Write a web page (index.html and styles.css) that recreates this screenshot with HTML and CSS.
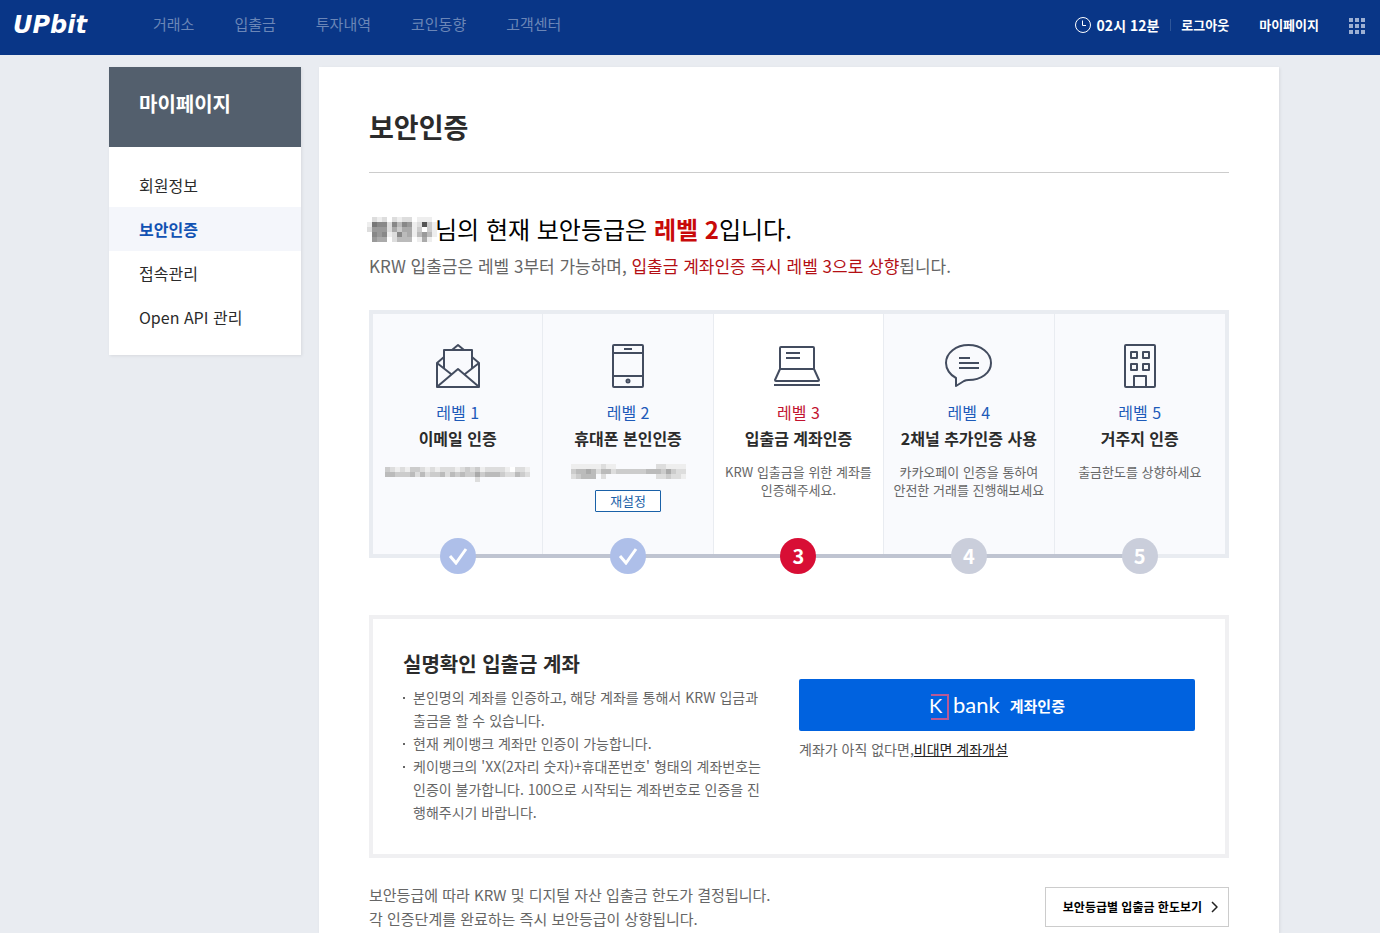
FILE: index.html
```
<!DOCTYPE html>
<html lang="ko">
<head>
<meta charset="UTF-8">
<meta name="viewport" content="width=device-width, initial-scale=1">
<title>보안인증 - UPbit</title>
<link rel="stylesheet" href="styles.css">
</head>
<body>
<header class="header">
	<a href="#" class="logo">UPbit</a>
	<nav class="gnb">
		<a href="#">거래소</a>
		<a href="#">입출금</a>
		<a href="#">투자내역</a>
		<a href="#">코인동향</a>
		<a href="#">고객센터</a>
	</nav>
	<div class="util">
		<span class="time">
			<svg width="16" height="16" viewBox="0 0 16 16"><circle cx="8" cy="8" r="7.5"/><path d="M7.500 3.500V8.500H11"/></svg>
			02시 12분
		</span>
		<a href="#" class="logout">로그아웃</a>
		<a href="#" class="mypage">마이페이지</a>
		<button type="button" class="btn-all" aria-label="전체메뉴">
			<svg width="16" height="16" viewBox="0 0 16 16"><path d="M0 0h4v4H0zM6 0h4v4H6zM12 0h4v4h-4zM0 6h4v4H0zM6 6h4v4H6zM12 6h4v4h-4zM0 12h4v4H0zM6 12h4v4H6zM12 12h4v4h-4z"/></svg>
		</button>
	</div>
</header>

<div class="container">
	<aside class="side">
		<h2>마이페이지</h2>
		<ul>
			<li><a href="#">회원정보</a></li>
			<li class="on"><a href="#">보안인증</a></li>
			<li><a href="#">접속관리</a></li>
			<li><a href="#">Open API 관리</a></li>
		</ul>
	</aside>

	<main class="content">
		<h1>보안인증</h1>

		<p class="now"><svg id="mask-name" class="mask-name" width="70" height="25" role="img" aria-label="이름"></svg>님의 현재 보안등급은 <strong>레벨 2</strong>입니다.</p>
		<p class="guide">KRW 입출금은 레벨 3부터 가능하며, <em>입출금 계좌인증 즉시 레벨 3으로 상향</em>됩니다.</p>

		<ol class="steps">
			<li>
				<svg class="icon" width="50" height="46" viewBox="0 0 50 46"><path d="M11 26V8H39V26M19 8l6-5 6 5M11 15l-7 6V45H46V21l-7-6M4 21l14 11M46 21L32 32M5 44l20-17 20 17"/></svg>
				<span class="level">레벨 1</span>
				<strong>이메일 인증</strong>
				<svg id="mask-email" class="mask-email" width="145" height="15" role="img" aria-label="이메일"></svg>
				<span class="badge done"><svg width="20" height="18" viewBox="0 0 20 18"><path d="M2 9l6 7L18 2"/></svg></span>
			</li>
			<li>
				<svg class="icon" width="50" height="46" viewBox="0 0 50 46"><rect x="10" y="3" width="30" height="42" rx="1"/><path d="M10 11H40M10 34H40M21 7h8"/><circle cx="25" cy="39" r="1.5"/></svg>
				<span class="level">레벨 2</span>
				<strong>휴대폰 본인인증</strong>
				<svg id="mask-phone" class="mask-phone" width="115" height="15" role="img" aria-label="휴대폰번호"></svg>
				<button type="button" class="btn-reset">재설정</button>
				<span class="badge done"><svg width="20" height="18" viewBox="0 0 20 18"><path d="M2 9l6 7L18 2"/></svg></span>
			</li>
			<li class="current">
				<svg class="icon" width="50" height="46" viewBox="0 0 50 46"><path d="M7 27V6q0-1 1-1H40q1 0 1 1V27zM7 27L2 38q0 1 1 1H45q1 0 1-1L41 27M1 43H47M13 11H27M13 16H27"/></svg>
				<span class="level">레벨 3</span>
				<strong>입출금 계좌인증</strong>
				<p>KRW 입출금을 위한 계좌를<br>인증해주세요.</p>
				<span class="badge">3</span>
			</li>
			<li>
				<svg class="icon" width="50" height="46" viewBox="0 0 50 46"><path d="M12 36C6 33 2 27 2 21 2 11 12 3 24.500 3S47 11 47 21 37 38 24.500 38Q22 38 20 39L12 44zM15 16H26M15 21H35M15 26H35"/></svg>
				<span class="level">레벨 4</span>
				<strong>2채널 추가인증 사용</strong>
				<p>카카오페이 인증을 통하여<br>안전한 거래를 진행해보세요</p>
				<span class="badge">4</span>
			</li>
			<li>
				<svg class="icon" width="50" height="46" viewBox="0 0 50 46"><rect x="10" y="3" width="30" height="42" rx="1"/><path d="M16 10h6v6h-6zM28 10h6v6h-6zM16 22h6v6h-6zM28 22h6v6h-6zM19 45V34H31V45"/></svg>
				<span class="level">레벨 5</span>
				<strong>거주지 인증</strong>
				<p>출금한도를 상향하세요</p>
				<span class="badge">5</span>
			</li>
		</ol>

		<section class="account">
			<div class="account-info">
				<h3>실명확인 입출금 계좌</h3>
				<ul>
					<li>본인명의 계좌를 인증하고, 해당 계좌를 통해서 KRW 입금과 출금을 할 수 있습니다.</li>
					<li>현재 케이뱅크 계좌만 인증이 가능합니다.</li>
					<li>케이뱅크의 'XX(2자리 숫자)+휴대폰번호' 형태의 계좌번호는 인증이 불가합니다. 100으로 시작되는 계좌번호로 인증을 진행해주시기 바랍니다.</li>
				</ul>
			</div>
			<div class="account-link">
				<button type="button" class="btn-kbank">
					<span class="kbank"><span class="k">K</span>bank</span>
					계좌인증
				</button>
				<p>계좌가 아직 없다면,<a href="#">비대면 계좌개설</a></p>
			</div>
		</section>

		<div class="limit">
			<p>보안등급에 따라 KRW 및 디지털 자산 입출금 한도가 결정됩니다.<br>각 인증단계를 완료하는 즉시 보안등급이 상향됩니다.</p>
			<button type="button" class="btn-limit">보안등급별 입출금 한도보기
				<svg width="8" height="12" viewBox="0 0 8 12"><path stroke-width="1.5" d="M1 1l5 5-5 5"/></svg>
			</button>
		</div>
	</main>
</div>

<script src="mask.js"></script>
</body>
</html>
```

FILE: styles.css
```
*{box-sizing: border-box;}
body,h1,h2,h3,p,ul,ol{margin: 0;padding: 0;}
ul,ol{list-style: none;}
body{
	display: flex;
	flex-direction: column;
	min-height: 100vh;
	background: #e9ecf1;
	color: #2b2b2b;
	font-family: "Noto Sans CJK KR","Noto Sans",sans-serif;
	font-size: 14px;
}
a{color: inherit;text-decoration: none;}
button{
	font: inherit;
	padding: 0;
	border: none;
	background: none;
	cursor: pointer;
}
svg{
	fill: none;
	stroke-linejoin: round;
}

/* header */
.header{
	display: flex;
	align-items: center;
	height: 55px;
	padding: 0 15px 6px 13px;
	background: #093687;
	color: #fff;
}
.logo{
	width: 140px;
	font: italic 700 24px/48px "DejaVu Sans",sans-serif;
}
.gnb{
	display: flex;
	gap: 40px;
	padding-bottom: 2px;
	font-size: 15px;
	color: #6b86b7;
}
.util{
	display: flex;
	align-items: center;
	margin-left: auto;
	font-size: 13px;
	font-weight: 700;
}
.time{
	display: flex;
	align-items: center;
	gap: 6px;
	font-size: 14px;
}
.time svg{stroke: #fff;}
.logout{
	margin-left: 11px;
	padding-left: 10px;
	border-left: 1px solid #2f5699;
	line-height: 12px;
}
.mypage{margin: 0 30px;}
.btn-all{
	height: 16px;
	margin-top: 2px;
}
.btn-all svg{
	display: block;
	fill: #9db0d3;
}

/* layout */
.container{
	display: flex;
	flex: 1;
	align-items: flex-start;
	gap: 18px;
	width: 100%;
	max-width: 1178px;
	margin: 0 auto;
	padding: 12px 0 0 8px;
}
.side{
	width: 192px;
	flex: none;
	background: #fff;
	box-shadow: 1px 1px 3px rgba(0,0,0,.08);
}
.side h2{
	height: 80px;
	padding-left: 30px;
	background: #535f6d;
	color: #fff;
	font-size: 20px;
	font-weight: 700;
	line-height: 74px;
}
.side ul{padding: 16px 0;}
.side a{
	display: block;
	padding-left: 30px;
	font-size: 16px;
	line-height: 44px;
}
.side .on a{
	background: #f4f6fb;
	color: #1152b3;
	font-weight: 700;
}
.content{
	flex: 1;
	align-self: stretch;
	padding: 40px 50px 0;
	background: #fff;
	box-shadow: 1px 1px 3px rgba(0,0,0,.08);
}
.content h1{
	height: 66px;
	border-bottom: 1px solid #ccc;
	font-size: 27px;
	font-weight: 700;
	line-height: 40px;
}
.now{
	margin-top: 36px;
	color: #000;
	font-size: 24px;
	line-height: 40px;
}
.now strong{
	color: #c80a0a;
	font-weight: 700;
}
.mask-name{
	margin: 0 -2px;
	vertical-align: -3px;
}
.guide{
	color: #666;
	font-size: 17px;
	line-height: 34px;
}
.guide em{
	color: #b40f14;
	font-style: normal;
}

/* steps */
.steps{
	display: flex;
	height: 248px;
	margin-top: 27px;
	border: 4px solid #e9ecf1;
}
.steps li{
	position: relative;
	display: flex;
	flex-direction: column;
	align-items: center;
	width: 20%;
	padding-top: 28px;
	border-right: 1px solid #e9ecf1;
	background: #f9fafd;
	text-align: center;
}
.steps li:last-child{border-right: none;}
.steps .current{background: #fff;}
.icon{
	stroke: #434c5f;
	stroke-width: 2;
}
.level{
	margin-top: 11px;
	color: #1e5ab9;
	font-size: 16px;
	line-height: 26px;
}
.current .level{color: #c2122f;}
.steps strong{
	font-size: 16px;
	font-weight: 700;
	line-height: 26px;
}
.steps p{
	margin-top: 12px;
	color: #666;
	font-size: 13px;
	line-height: 18px;
}
.mask-email{margin-top: 16px;}
.mask-phone{margin-top: 13px;}
.btn-reset{
	width: 66px;
	height: 22px;
	margin-top: 11px;
	border: 1px solid #1a61a8;
	border-radius: 1px;
	background: #fff;
	color: #1a61a8;
	font-size: 13px;
	line-height: 20px;
}
.badge{
	position: absolute;
	left: 50%;
	bottom: -20px;
	z-index: 1;
	width: 36px;
	height: 36px;
	margin-left: -18px;
	border-radius: 50%;
	background: #cacedb;
	color: #fff;
	font-size: 20px;
	font-weight: 700;
	line-height: 36px;
}
.current .badge{background: #d80e35;}
.steps .done{
	display: flex;
	align-items: center;
	justify-content: center;
	background: #aebfe9;
}
.done svg{
	stroke: #fff;
	stroke-width: 3;
	stroke-linejoin: miter;
}
/* line between the badges */
.steps li + li:before{
	content: '';
	position: absolute;
	right: 50%;
	bottom: -4px;
	width: 101%;
	height: 4px;
	background: #bfc4d1;
}

/* account */
.account{
	display: flex;
	justify-content: space-between;
	margin-top: 57px;
	padding: 30px;
	border: 4px solid #f0f0f2;
}
.account-info{width: 360px;}
.account h3{
	font-size: 20px;
	font-weight: 700;
	line-height: 30px;
}
.account ul{
	margin-top: 7px;
	color: #666;
	line-height: 23px;
}
.account li{
	position: relative;
	padding-left: 10px;
	word-break: break-all;
}
.account li:before{
	content: '';
	position: absolute;
	top: 11px;
	left: 0;
	width: 2px;
	height: 2px;
	background: #666;
}
.account-link{
	width: 396px;
	padding-top: 30px;
}
.btn-kbank{
	display: flex;
	align-items: center;
	justify-content: center;
	gap: 10px;
	width: 100%;
	height: 52px;
	border-radius: 2px;
	background: #0062df;
	color: #fff;
	font-size: 15px;
	font-weight: 700;
}
.kbank{
	display: flex;
	align-items: center;
	gap: 4px;
	font: 22px/22px Lato,sans-serif;
}
.k{
	position: relative;
	width: 20px;
	font-size: 20px;
	text-align: left;
}
.k:after{
	content: '';
	position: absolute;
	top: 0;
	right: 0;
	width: 16px;
	height: 22px;
	border: 2px solid #b85a96;
	border-left: none;
}
.account-link p{
	margin-top: 8px;
	color: #666;
	line-height: 20px;
}
.account-link a{
	color: #222;
	text-decoration: underline;
}

/* limit */
.limit{
	display: flex;
	align-items: flex-start;
	justify-content: space-between;
	margin-top: 25px;
	color: #666;
	font-size: 15px;
	line-height: 24px;
}
.btn-limit{
	display: flex;
	align-items: center;
	gap: 9px;
	height: 40px;
	margin-top: 4px;
	padding: 0 9px 0 17px;
	border: 1px solid #ccc;
	color: #000;
	font-size: 12px;
	font-weight: 700;
}
.btn-limit svg{stroke: #222;}
```

FILE: mask.js
```
// 개인정보 모자이크 처리 (한 글자 = 5px 블록, 16진수 = 밝기)
(() => {
	const SIZE = 5;
	const masks = {
		'mask-name': [
			'.ded.dedd.eee.',
			'e788d8b89ed5ce',
			'd999dacaaecfce',
			'.898ed8baeb9be',
			'.9aa.dbbb.eae.'
		],
		'mask-email': [
			'cdedeccdededddedcdceddddefdde',
			'bbcccbdbdccbdbcbccacbbbcddbcd',
			'..................d..........'
		],
		'mask-phone': [
			'eeeeeedee........ddeeee',
			'cbbabdbbdccccccbbbcacdd',
			'dcbbb.d..........ddcdde'
		]
	};

	for (let id in masks) {
		let str = '';
		masks[id].forEach((row, y) => {
			row.split('').forEach((c, x) => {
				if (c === '.') return;
				str += '<rect x="' + x * SIZE + '" y="' + y * SIZE + '" width="' + SIZE + '" height="' + SIZE + '" fill="#' + c + c + c + '"/>';
			});
		});
		document.getElementById(id).innerHTML = str;
	}
})()
```
